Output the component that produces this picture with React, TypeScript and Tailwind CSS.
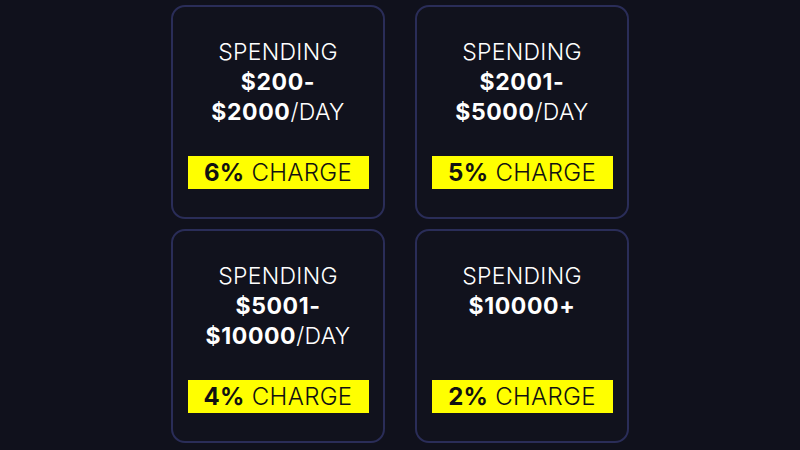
import React from "react";

type Tier = { pre: string; amount: React.ReactNode; pct: string };

const B = ({ children }: { children: React.ReactNode }) => (
  <span className="font-bold tracking-[0.6px]">{children}</span>
);

const tiers: Tier[] = [
  { pre: "SPENDING", amount: (<><B>$200-</B><br /><B>$2000</B>/DAY</>), pct: "6%" },
  { pre: "SPENDING", amount: (<><B>$2001-</B><br /><B>$5000</B>/DAY</>), pct: "5%" },
  { pre: "SPENDING", amount: (<><B>$5001-</B><br /><B>$10000</B>/DAY</>), pct: "4%" },
  { pre: "SPENDING", amount: (<><B>$10000+</B></>), pct: "2%" },
];

export default function App() {
  return (
    <div
      className="w-[800px] h-[450px] bg-[#10111c] flex justify-center pt-[5px] overflow-hidden"
      style={{ fontFamily: "Inter, 'Liberation Sans', sans-serif" }}
    >
      <div className="grid grid-cols-[214px_214px] gap-x-[30px] gap-y-[10px] h-fit">
        {tiers.map((t, i) => (
          <div
            key={i}
            className="h-[214px] rounded-[14px] border-2 border-[#2a2d58] bg-[#11121d] flex flex-col justify-between items-center pt-[30px] pb-[28px] px-[14px]"
          >
            <div className="text-white text-[23px] leading-[30px] font-light text-center tracking-[0.3px]">
              {t.pre}
              <br />
              {t.amount}
            </div>
            <div className="w-[181px] h-[33px] bg-[#ffff00] text-[#111111] text-[24px] font-light flex items-center justify-center leading-none tracking-[0.3px]">
              <span className="font-bold">{t.pct}</span>&nbsp;CHARGE
            </div>
          </div>
        ))}
      </div>
    </div>
  );
}
